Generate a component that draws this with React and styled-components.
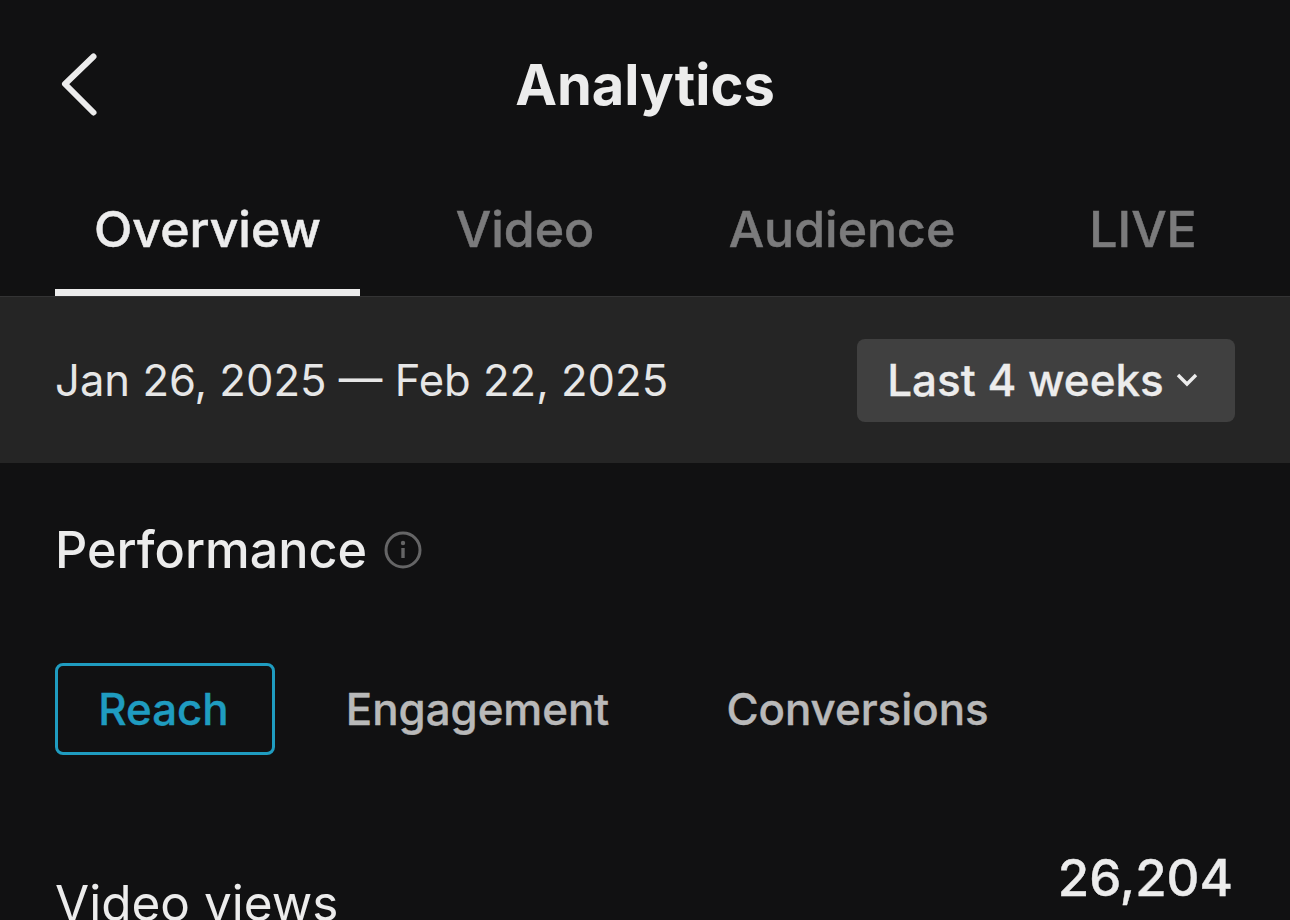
import React from 'react';
import styled, { createGlobalStyle } from 'styled-components';

const GlobalStyle = createGlobalStyle`
  html, body {
    margin: 0;
    padding: 0;
    background: #111112;
  }
  body {
    font-family: Inter, "Liberation Sans", sans-serif;
  }
`;

const Screen = styled.div`
  width: 1290px;
  height: 920px;
  overflow: hidden;
  background: #111112;
  color: #ececec;
`;

const Header = styled.header`
  position: relative;
  height: 170px;
  display: flex;
  align-items: center;
  justify-content: center;
`;

const BackButton = styled.button`
  position: absolute;
  left: 58px;
  top: 51px;
  width: 42px;
  height: 68px;
  padding: 0;
  border: 0;
  background: none;
  color: #ececec;
`;

const Title = styled.h1`
  margin: 0;
  font-size: 56px;
  font-weight: 700;
  line-height: 60px;
`;

const Tabs = styled.nav`
  display: flex;
  height: 126px;
  padding: 0 55px;
  border-bottom: 1px solid #333334;
`;

const Tab = styled.div`
  flex: none;
  width: ${p => p.$width}px;
  margin-right: ${p => p.$gap}px;
  display: flex;
  align-items: center;
  justify-content: center;
  padding-bottom: 1px;
  box-sizing: border-box;
  font-size: 50px;
  font-weight: 500;
  -webkit-text-stroke: 0.5px currentColor;
  color: ${p => (p.$active ? '#ececec' : '#7b7b7c')};
  border-bottom: 7px solid ${p => (p.$active ? '#ececec' : 'transparent')};
`;

const DateBand = styled.div`
  height: 166px;
  padding: 0 55px;
  display: flex;
  align-items: center;
  justify-content: space-between;
  background: #252525;
`;

const DateText = styled.span`
  font-size: 43.6px;
  color: #e6e6e6;
`;

const RangeButton = styled.button`
  width: 378px;
  height: 83px;
  padding: 0 7px 0 0;
  border: 0;
  border-radius: 8px;
  background: #404040;
  color: #ececec;
  font-family: inherit;
  font-size: 44px;
  font-weight: 500;
  -webkit-text-stroke: 0.3px currentColor;
  display: flex;
  align-items: center;
  justify-content: center;
  gap: 12px;
`;

const Section = styled.section`
  padding: 0 55px;
`;

const SectionHead = styled.div`
  margin-top: 57px;
  height: 60px;
  display: flex;
  align-items: center;
  gap: 17px;
`;

const SectionTitle = styled.h2`
  margin: 0;
  padding-bottom: 2px;
  font-size: 50.3px;
  font-weight: 500;
`;

const InfoIcon = styled.svg`
  color: #656566;
`;

const Chips = styled.div`
  margin-top: 83px;
  display: flex;
  align-items: center;
`;

const Chip = styled.div`
  flex: none;
  height: 92px;
  box-sizing: border-box;
  display: flex;
  align-items: center;
  justify-content: center;
  width: ${p => p.$width}px;
  padding-right: 3px;
  border: 3px solid ${p => (p.$active ? '#1f9cc0' : 'transparent')};
  border-radius: 8px;
  color: ${p => (p.$active ? '#1f9cc0' : '#b9b9b9')};
  font-size: 43.8px;
  font-weight: 500;
  -webkit-text-stroke: 0.4px currentColor;
`;

const MetricRow = styled.div`
  margin-top: 93px;
  display: flex;
  justify-content: space-between;
  align-items: flex-start;
`;

const MetricLabel = styled.div`
  margin-top: 25px;
  font-size: 49.5px;
  color: #ececec;
`;

const MetricValue = styled.div`
  text-align: right;
  font-size: 51px;
  font-weight: 500;
  -webkit-text-stroke: 0.4px currentColor;
  line-height: 60px;
  margin-right: 2px;
`;

export default function App() {
  return (
    <Screen>
      <GlobalStyle />
      <Header>
        <BackButton aria-label="Back">
          <svg width="42" height="68" viewBox="0 0 42 68" fill="none">
            <path d="M35.5 5.5 L7 33 L35.5 61.5" stroke="currentColor" strokeWidth="6" strokeLinecap="round" strokeLinejoin="round" />
          </svg>
        </BackButton>
        <Title>Analytics</Title>
      </Header>
      <Tabs>
        <Tab $active $width={305} $gap={55}>Overview</Tab>
        <Tab $width={220} $gap={55}>Video</Tab>
        <Tab $width={304} $gap={54}>Audience</Tab>
        <Tab $width={190} $gap={0}>LIVE</Tab>
      </Tabs>
      <DateBand>
        <DateText>Jan 26, 2025 — Feb 22, 2025</DateText>
        <RangeButton>
          Last 4 weeks
          <svg width="22" height="16" viewBox="0 0 22 16" fill="none">
            <path d="M2 3 L11 12 L20 3" stroke="currentColor" strokeWidth="3.4" />
          </svg>
        </RangeButton>
      </DateBand>
      <Section>
        <SectionHead>
          <SectionTitle>Performance</SectionTitle>
          <InfoIcon width="38" height="38" viewBox="0 0 38 38" fill="none">
            <circle cx="19" cy="19" r="17" stroke="currentColor" strokeWidth="3" />
            <circle cx="19" cy="12" r="2.2" fill="currentColor" />
            <path d="M19 17 V27" stroke="currentColor" strokeWidth="3.4" />
          </InfoIcon>
        </SectionHead>
        <Chips>
          <Chip $active $width={220}>Reach</Chip>
          <Chip $width={408}>Engagement</Chip>
          <Chip $width={352}>Conversions</Chip>
        </Chips>
        <MetricRow>
          <MetricLabel>Video views</MetricLabel>
          <MetricValue>26,204</MetricValue>
        </MetricRow>
      </Section>
    </Screen>
  );
}
